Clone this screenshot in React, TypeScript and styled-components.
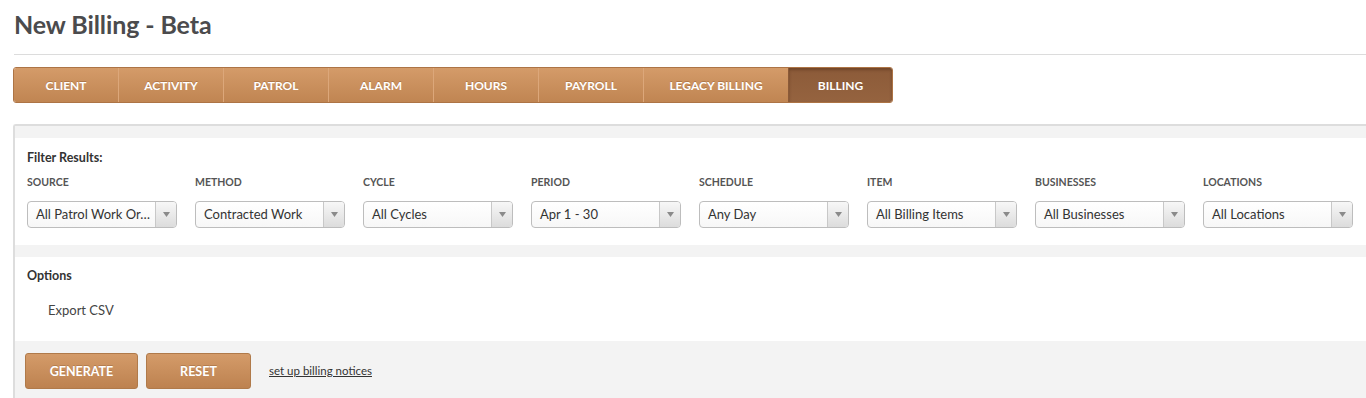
import styled, {createGlobalStyle} from "styled-components";

const GlobalStyle = createGlobalStyle`
    body {
        margin: 0;
        background: #fff;
        font-family: 'Lato', 'Open Sans', sans-serif;
        color: #333;
    }
`;

const tabs = ['Client', 'Activity', 'Patrol', 'Alarm', 'Hours', 'Payroll', 'Legacy Billing', 'Billing'];

const filters = [
    {label: 'Source', value: 'All Patrol Work Or…'},
    {label: 'Method', value: 'Contracted Work'},
    {label: 'Cycle', value: 'All Cycles'},
    {label: 'Period', value: 'Apr 1 - 30'},
    {label: 'Schedule', value: 'Any Day'},
    {label: 'Item', value: 'All Billing Items'},
    {label: 'Businesses', value: 'All Businesses'},
    {label: 'Locations', value: 'All Locations'},
];

const App = () => {
    return <Page>
        <GlobalStyle/>
        <Title>New Billing - Beta</Title>
        <Divider/>
        <TabBar>
            {tabs.map((t) => (
                <Tab key={t} $active={t === 'Billing'} $wide={t === 'Legacy Billing'}>{t}</Tab>
            ))}
        </TabBar>

        <Panel>
            <Strip/>
            <Section>
                <SectionTitle>Filter Results:</SectionTitle>
                <FilterRow>
                    {filters.map((f) => (
                        <Filter key={f.label}>
                            <FilterLabel>{f.label}</FilterLabel>
                            <Select>
                                <SelectValue>{f.value}</SelectValue>
                                <SelectArrow>
                                    <svg width="7" height="5" viewBox="0 0 7 5">
                                        <path d="M0 0 L7 0 L3.5 5 Z" fill="#8a8a8a"/>
                                    </svg>
                                </SelectArrow>
                            </Select>
                        </Filter>
                    ))}
                </FilterRow>
            </Section>
            <Strip/>
            <OptionsSection>
                <SectionTitle>Options</SectionTitle>
                <OptionItem>Export CSV</OptionItem>
            </OptionsSection>
            <Footer>
                <Button $width={113}>Generate</Button>
                <Button $width={105}>Reset</Button>
                <NoticeLink href="#">set up billing notices</NoticeLink>
            </Footer>
        </Panel>
    </Page>;
};

const Page = styled.div`
    padding-left: 13px;
    overflow: hidden;
`;

const Title = styled.h1`
    margin: 0 0 0 1px;
    padding-top: 9px;
    height: 54px;
    box-sizing: border-box;
    font-size: 25px;
    line-height: 30px;
    font-weight: 700;
    color: #4b4b4d;
    letter-spacing: -0.1px;
`;

const Divider = styled.div`
    margin-left: 1px;
    height: 0;
    border-top: 1px solid #dcdcdc;
`;

const TabBar = styled.div`
    display: inline-flex;
    margin-top: 12px;
    height: 36px;
    border: 1px solid #ad7445;
    border-radius: 3px;
    overflow: hidden;
    box-sizing: border-box;
`;

const Tab = styled.div<{ $active?: boolean; $wide?: boolean }>`
    display: flex;
    align-items: center;
    justify-content: center;
    width: ${(props) => props.$wide ? 145 : 105}px;
    box-sizing: border-box;
    border-left: 1px solid ${(props) => props.$active ? '#8b5a38' : '#dca77a'};
    background: ${(props) => props.$active
            ? 'linear-gradient(#8c5b39, #95633f)'
            : 'linear-gradient(#d49b69, #c08552)'};
    box-shadow: ${(props) => props.$active ? 'inset 0 2px 3px rgba(60, 30, 10, 0.35)' : 'none'};
    color: #fff;
    font-size: 12px;
    font-weight: 700;
    text-transform: uppercase;
    text-shadow: 0 -1px 0 rgba(120, 70, 30, 0.35);

    &:first-child {
        border-left: none;
        width: 104px;
    }

    &:last-child {
        width: 104px;
    }
`;

const Panel = styled.div`
    margin-top: 21px;
    border-top: 2px solid #dddddd;
    border-left: 2px solid #dddddd;
    border-top-left-radius: 3px;
`;

const Strip = styled.div`
    height: 12px;
    background: #f3f3f3;
`;

const Section = styled.div`
    padding: 12px 0 17px 12px;
    background: #fff;
`;

const SectionTitle = styled.div`
    font-size: 12.5px;
    font-weight: 700;
    color: #333;
    line-height: 16px;
`;

const FilterRow = styled.div`
    display: flex;
    gap: 18px;
    margin-top: 9px;
`;

const Filter = styled.div`
    display: flex;
    flex-direction: column;
    width: 150px;
`;

const FilterLabel = styled.div`
    font-size: 10.5px;
    font-weight: 700;
    color: #555;
    text-transform: uppercase;
    line-height: 14px;
`;

const Select = styled.div`
    display: flex;
    margin-top: 12px;
    height: 27px;
    box-sizing: border-box;
    border: 1px solid #bdbdbd;
    border-radius: 4px;
    background: linear-gradient(#ffffff, #f7f7f7);
    overflow: hidden;
`;

const SelectValue = styled.div`
    flex: 1;
    padding-left: 8px;
    font-size: 13px;
    line-height: 25px;
    color: #333;
    white-space: nowrap;
    overflow: hidden;
`;

const SelectArrow = styled.div`
    display: flex;
    align-items: center;
    justify-content: center;
    width: 20px;
    border-left: 1px solid #c8c8c8;
    background: linear-gradient(#f7f7f7, #dcdcdc);
`;

const OptionsSection = styled.div`
    padding: 11px 0 23px 12px;
    background: #fff;
`;

const OptionItem = styled.div`
    margin: 18px 0 0 21px;
    font-size: 13px;
    line-height: 16px;
    color: #444;
`;

const Footer = styled.div`
    display: flex;
    align-items: flex-start;
    gap: 8px;
    height: 58px;
    box-sizing: border-box;
    padding: 12px 0 0 10px;
    background: #f3f3f3;
`;

const Button = styled.button<{ $width: number }>`
    width: ${(props) => props.$width}px;
    height: 36px;
    border: 1px solid #b07a4a;
    border-radius: 3px;
    background: linear-gradient(#d49b69, #bd8250);
    color: #fff;
    font-family: 'Lato', sans-serif;
    font-size: 12.5px;
    font-weight: 700;
    text-transform: uppercase;
    text-shadow: 0 -1px 0 rgba(120, 70, 30, 0.3);
    cursor: pointer;
`;

const NoticeLink = styled.a`
    margin: 11px 0 0 10px;
    font-size: 11.5px;
    line-height: 14px;
    color: #333;
    text-decoration: underline;
`;

export default App;
